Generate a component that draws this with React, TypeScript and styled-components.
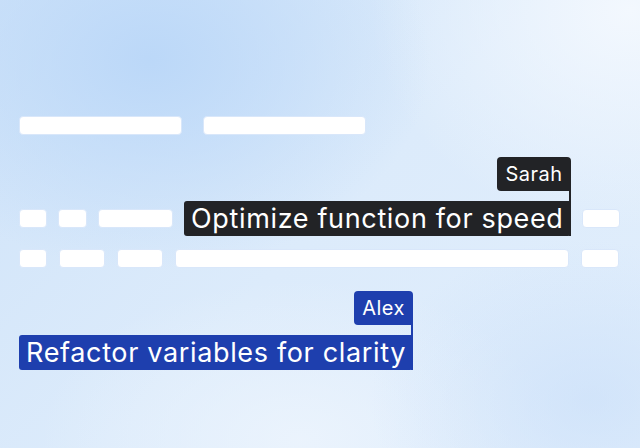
import React from "react";
import styled, { createGlobalStyle } from "styled-components";

const Global = createGlobalStyle`
  html, body { margin: 0; padding: 0; }
  body { font-family: Inter, "Noto Sans", sans-serif; }
`;

const Page = styled.div`
  width: 640px;
  height: 448px;
  box-sizing: border-box;
  padding: 116px 20px 0 19px;
  display: flex;
  flex-direction: column;
  overflow: hidden;
  background:
    radial-gradient(ellipse 280px 210px at 150px 60px, rgba(186, 215, 248, 0.95), rgba(186, 215, 248, 0) 100%),
    radial-gradient(ellipse 220px 160px at 590px 400px, rgba(200, 222, 249, 0.6), rgba(200, 222, 249, 0) 100%),
    radial-gradient(ellipse 260px 160px at 300px 440px, rgba(236, 244, 253, 0.9), rgba(236, 244, 253, 0) 100%),
    radial-gradient(ellipse 260px 220px at 630px 10px, rgba(243, 248, 254, 1), rgba(243, 248, 254, 0) 100%),
    linear-gradient(135deg, #cfe3f9 0%, #dcebfb 50%, #e1eefc 100%);
`;

const Row = styled.div<{ $gap: number; $mt: number }>`
  display: flex;
  align-items: center;
  gap: ${(p) => p.$gap}px;
  margin-top: ${(p) => p.$mt}px;
`;

const Bar = styled.div<{ $w: number }>`
  width: ${(p) => p.$w}px;
  height: 19px;
  flex: none;
  box-sizing: border-box;
  background: #ffffff;
  border: 1px solid #d9e7fa;
  border-radius: 4px;
`;

const Highlight = styled.span<{ $bg: string }>`
  position: relative;
  flex: none;
  display: inline-block;
  height: 35px;
  box-sizing: border-box;
  padding: 0 7px 0 7px;
  background: ${(p) => p.$bg};
  color: #ffffff;
  font-family: Inter, "Noto Sans", sans-serif;
  font-size: 27px;
  line-height: 35px;
  letter-spacing: 0.65px;
  border-radius: 3px 0 3px 3px;
  white-space: nowrap;
`;

const Caret = styled.span<{ $bg: string }>`
  position: absolute;
  right: 0;
  bottom: 0;
  width: 2px;
  height: 46px;
  background: ${(p) => p.$bg};
`;

const Tag = styled.span<{ $bg: string }>`
  position: absolute;
  right: 0;
  bottom: calc(100% + 10px);
  height: 34px;
  box-sizing: border-box;
  padding: 0 8px;
  background: ${(p) => p.$bg};
  color: #ffffff;
  font-family: Inter, "Noto Sans", sans-serif;
  font-size: 20px;
  line-height: 34px;
  letter-spacing: 0.5px;
  border-radius: 4px 4px 0 4px;
  white-space: nowrap;
`;

const DARK = "#222326";
const BLUE = "#1e3fae";

function Cursor({ name, text, bg }: { name: string; text: string; bg: string }) {
  return (
    <Highlight $bg={bg}>
      {text}
      <Caret $bg={bg} />
      <Tag $bg={bg}>{name}</Tag>
    </Highlight>
  );
}

export default function App() {
  return (
    <>
      <Global />
      <Page>
        <Row $gap={21} $mt={0}>
          <Bar $w={163} />
          <Bar $w={163} />
        </Row>
        <Row $gap={11} $mt={66}>
          <Bar $w={28} />
          <Bar $w={29} />
          <Bar $w={75} />
          <Cursor name="Sarah" text="Optimize function for speed" bg={DARK} />
          <Bar $w={38} />
        </Row>
        <Row $gap={12} $mt={13}>
          <Bar $w={28} />
          <Bar $w={46} />
          <Bar $w={46} />
          <Bar $w={394} />
          <Bar $w={38} />
        </Row>
        <Row $gap={12} $mt={67}>
          <Cursor name="Alex" text="Refactor variables for clarity" bg={BLUE} />
        </Row>
      </Page>
    </>
  );
}
